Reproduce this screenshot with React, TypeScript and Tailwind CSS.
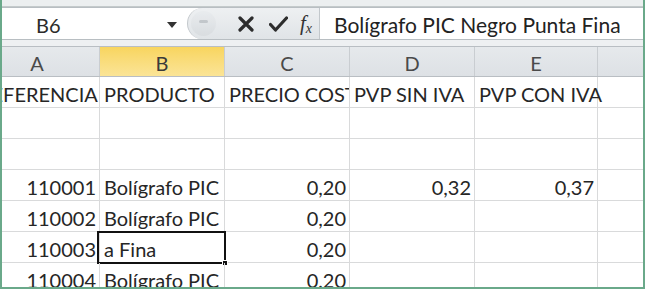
import React from "react";

type Cell = { text?: string; align?: "left" | "right"; selected?: boolean };

const colWidths = ["w-[125px]", "w-[125px]", "w-[125px]", "w-[125px]", "w-[123px]", "w-[125px]"];
const colLabels = ["A", "B", "C", "D", "E", ""];

const rows: Cell[][] = [
  [
    { text: "REFERENCIA" },
    { text: "PRODUCTO" },
    { text: "PRECIO COSTE" },
    { text: "PVP SIN IVA" },
    { text: "PVP CON IVA" },
    {},
  ],
  [{}, {}, {}, {}, {}, {}],
  [{}, {}, {}, {}, {}, {}],
  [
    { text: "110001", align: "right" },
    { text: "Bolígrafo PIC Negro Punta Fina" },
    { text: "0,20", align: "right" },
    { text: "0,32", align: "right" },
    { text: "0,37", align: "right" },
    {},
  ],
  [
    { text: "110002", align: "right" },
    { text: "Bolígrafo PIC Negro Punta Fina" },
    { text: "0,20", align: "right" },
    {},
    {},
    {},
  ],
  [
    { text: "110003", align: "right" },
    { text: "a Fina", selected: true },
    { text: "0,20", align: "right" },
    {},
    {},
    {},
  ],
  [
    { text: "110004", align: "right" },
    { text: "Bolígrafo PIC Negro Punta Fina" },
    { text: "0,20", align: "right" },
    {},
    {},
    {},
  ],
];

const FormulaBar = () => (
  <div className="flex h-[33px] border-y border-[#b8bec2] bg-white">
    {/* Name box */}
    <div className="flex w-[185px] items-center justify-between pl-[34px] pr-[10px] pt-[2px] text-[20px] text-[#2b2b2b]">
      <span>B6</span>
      <svg width="10" height="6" viewBox="0 0 10 6">
        <path d="M0 0 H10 L5 6 Z" fill="#333" />
      </svg>
    </div>
    {/* Buttons */}
    <div className="flex w-[132px] items-center rounded-l-full border-l border-[#c3c8cc] bg-gradient-to-b from-[#eef0f2] to-[#e0e4e7] pl-[3px]">
      <div className="flex h-[25px] w-[25px] items-center justify-center rounded-full bg-gradient-to-b from-[#e8ebee] to-[#d6dadd] opacity-70">
        <div className="mb-[4px] h-[3px] w-[9px] rounded bg-[#b3b8bd]" />
      </div>
      <div className="ml-[20px] flex w-[20px] justify-center">
        <svg width="16" height="16" viewBox="0 0 16 16">
          <path d="M2 2 L14 14 M14 2 L2 14" stroke="#2d2d2d" strokeWidth="3.2" strokeLinecap="round" />
        </svg>
      </div>
      <div className="ml-[12px] flex w-[20px] justify-center">
        <svg width="19" height="16" viewBox="0 0 19 16">
          <path d="M1.5 8.5 L6.5 14 L17.5 2" stroke="#2d2d2d" strokeWidth="3.2" fill="none" strokeLinecap="round" strokeLinejoin="round" />
        </svg>
      </div>
      <div className="ml-[12px] font-['Liberation_Serif',serif] text-[21px] italic text-[#333] leading-none">
        f<span className="relative top-[3px] text-[14px]">x</span>
      </div>
    </div>
    {/* Formula input */}
    <div className="flex flex-1 items-center border-l border-[#c3c8cc] pl-[14px] pt-[2px] text-[21px] text-[#222]">
      Bolígrafo PIC Negro Punta Fina
    </div>
  </div>
);

export default function App() {
  return (
    <div className="h-[289px] w-[645px] overflow-hidden border-x-2 border-b-2 border-[#6aa98a] bg-white font-['Lato','Open_Sans',sans-serif]">
      <div className="h-[7px] border-b border-[#c4cacb] bg-[#eceff0]" />
      <FormulaBar />
      <div className="h-[6px] bg-[#eef0f2]" />
      <div className="-ml-[27px] flex flex-col">
        {/* Column headers */}
        <div className="flex h-[31px] border-y border-[#b9bec3]">
          {colLabels.map((label, i) => (
            <div
              key={i}
              className={`${colWidths[i]} flex shrink-0 items-center justify-center border-r border-[#c9cdd1] pt-[3px] text-[20px] ${
                label === "B"
                  ? "bg-gradient-to-b from-[#f8d55e] to-[#fbe496] text-[#3a3a3a]"
                  : "bg-gradient-to-b from-[#e6e9ec] to-[#dde1e5] text-[#4a4a4a]"
              }`}
            >
              {label}
            </div>
          ))}
        </div>
        {/* Cells */}
        {rows.map((row, r) => (
          <div key={r} className="flex h-[31px] border-b border-[#d9dadb]">
            {row.map((cell, c) => {
              // text spills into the next cell only when that one is empty
              const clip = !cell.selected && !!row[c + 1]?.text;
              return (
                <div
                  key={c}
                  className={`${colWidths[c]} relative flex shrink-0 items-end border-r border-[#d9dadb] pb-[1px] text-[20px] leading-[24px] text-[#262626] ${
                    cell.align === "right" ? "justify-end pr-[3px]" : "justify-start pl-[4px]"
                  } ${clip ? "overflow-hidden" : ""}`}
                >
                  <span className="whitespace-nowrap">{cell.text}</span>
                  {cell.selected && (
                    <div className="absolute -left-[3px] -right-[2px] -top-[1px] -bottom-[2px] border-2 border-[#111]">
                      <div className="absolute -bottom-[4px] -right-[4px] h-[6px] w-[6px] border border-white bg-[#111]" />
                    </div>
                  )}
                </div>
              );
            })}
          </div>
        ))}
      </div>
    </div>
  );
}
